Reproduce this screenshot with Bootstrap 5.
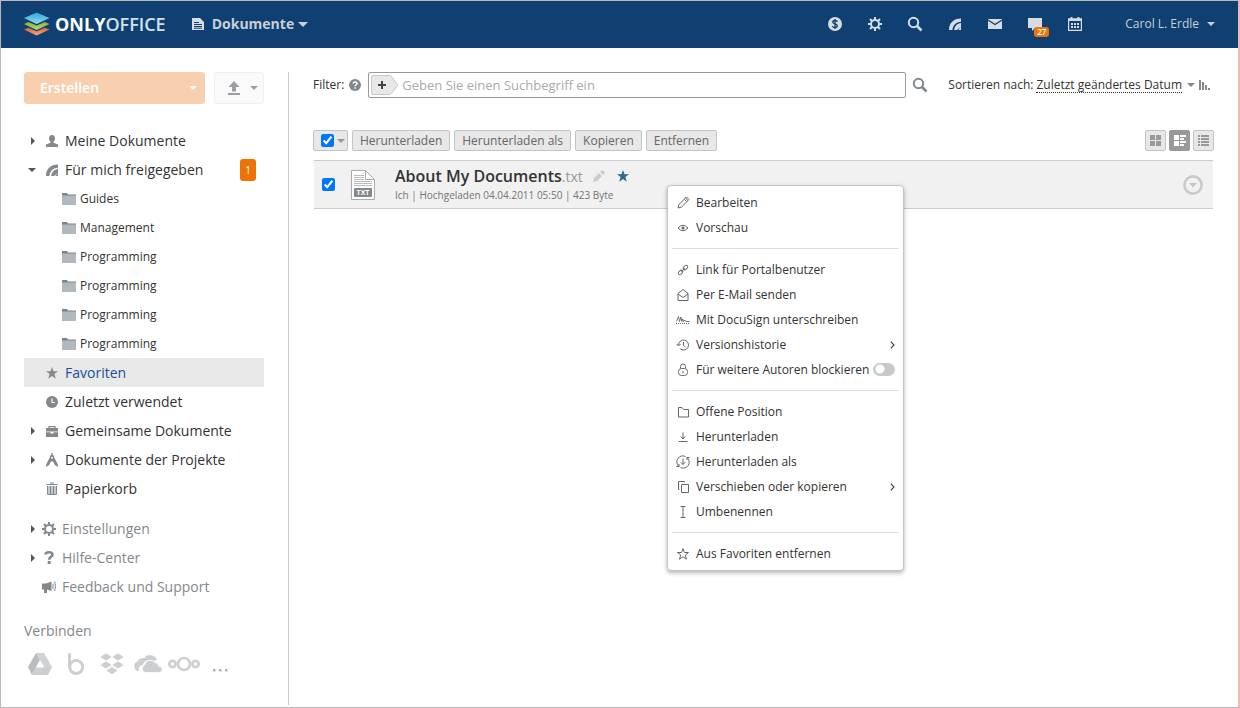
<!DOCTYPE html>
<html lang="de">
<head>
<meta charset="utf-8">
<meta name="viewport" content="width=device-width, initial-scale=1">
<title>ONLYOFFICE – Dokumente</title>
<link href="https://cdn.jsdelivr.net/npm/bootstrap@5.3.0/dist/css/bootstrap.min.css" rel="stylesheet">
<style>
  :root { --oo-navy: #0f4071; --oo-orange: #ed7309; --oo-text: #333; --oo-gray: #83888d; }
  body { font: 12px/16px "Open Sans", sans-serif; color: var(--oo-text); border: 1px solid #b9b9b9; border-right: 2px solid #f3b6b1; background: #fff; }
  a { color: inherit; text-decoration: none; }
  svg { display: block; flex: none; }
  button { font: inherit; color: inherit; }
  .plain-btn { border: 0; background: none; padding: 0; }
  .caret { width: 0; height: 0; flex: none; border: 4px solid transparent; border-top-color: currentColor; border-bottom: 0; }
  .caret-lg { border-width: 5px; border-bottom: 0; }

  .topbar { height: 47px; background: var(--oo-navy); color: #c9cfd6; padding: 0 23px 1px 22px; }
  .brand { font-size: 18px; line-height: 28px; font-weight: 700; color: #fff; }
  .brand svg { margin-right: 5px; }
  .brand span { color: #d3e2e9; font-weight: 600; }
  .module-btn { font-size: 14px; font-weight: 700; margin-left: 26px; }
  .top-icons { gap: 20px; color: #d5dce4; }
  .top-icons a { width: 20px; height: 20px; display: flex; align-items: center; justify-content: center; position: relative; }
  .count { position: absolute; left: 9px; top: 13px; font-size: 8px; line-height: 10px; font-weight: 600; color: #fff; background: var(--oo-orange); border-radius: 3px; padding: 0 3px; }
  .user-btn { margin-left: 40px; }

  .page { margin: 24px 0 2px 23px; }
  .sidebar { width: 265px; flex: none; padding-right: 24px; border-right: 1px solid #ccc; }
  .actions { gap: 9px; }
  .create-btn { height: 32px; background: #f8d0b0; color: #fff; border-radius: 3px; padding: 0 8px 0 16px; font-size: 14px; font-weight: 600; }
  .upload-btn { width: 50px; height: 32px; padding: 0 5px 0 12px; background: #fafafa; border: 1px solid #f0f0f0; border-radius: 3px; color: #9b9fa3; }
  .tree { margin-top: 22px; font-size: 14px; line-height: 20px; }
  .tree a { display: flex; align-items: center; height: 29px; padding-right: 8px; }
  .tree .ico { width: 14px; margin-left: 5px; margin-right: 6px; color: var(--oo-gray); }
  .tree .arrow { width: 16px; height: 10px; color: #555; }
  .tree .sub { padding-left: 38px; font-size: 12px; gap: 4px; }
  .tree .active { background: #e9e9e9; color: #1a4f9c; }
  .tree .new-badge { width: 16px; height: 22px; font-size: 10px; line-height: 22px; text-align: center; color: #fff; background: var(--oo-orange); border-radius: 3px; }
  .tree-muted { margin-top: 11px; color: var(--oo-gray); }
  .tree-muted .ico { margin-left: 2px; margin-right: 6px; }
  .connect-title { margin-top: 20px; font-size: 14px; line-height: 20px; color: var(--oo-gray); }
  .clouds { margin-top: 10px; margin-left: -2px; height: 26px; color: #ccced0; }
  .clouds a { width: 36px; display: flex; justify-content: center; }

  .content { padding: 0 24px; min-width: 0; }
  .help-ico { margin: 0 7px 0 5px; }
  .search-box { height: 26px; border: 1px solid #999; border-radius: 2px; padding: 0 2px; }
  .search-box input { font-size: 13px; border: 0; outline: 0; background: none; padding: 0; margin-left: 3px; color: #333; }
  .search-box input::placeholder { color: #aaa; opacity: 1; }
  .find-btn { margin: 0 20px 0 6px; color: var(--oo-gray); }
  .sort-label { margin-right: 3px; }
  .sort-link { border-bottom: 1px dotted #333; line-height: 15px; }
  .sort-caret { color: var(--oo-gray); margin: 0 4px 0 5px; }
  .sort-ico { margin-right: 3px; }
  .toolbar { margin-top: 32px; gap: 4px; }
  .views { gap: 3px; }
  .tool-btn { height: 21px; border: 1px solid #c4c4c4; border-radius: 2px; background: #e8e8e8; color: #666; line-height: 19px; padding: 0 7px; }
  .tool-check { gap: 3px; padding-right: 2px; }
  .tool-check .caret { color: #999; }
  .view-btn { width: 21px; height: 21px; border: 1px solid #c4c4c4; border-radius: 2px; background: #e8e8e8; color: #999; padding: 0; display: flex; align-items: center; justify-content: center; }
  .view-btn.on { background: #999; border-color: #999; color: #fff; }
  .tick { width: 13px; height: 13px; margin: 0; accent-color: #0075ff; flex: none; }
  .file-row { margin: 9px 1px 0; height: 49px; border-top: 1px solid #ccc; border-bottom: 1px solid #ccc; background: #f1f1f1; padding: 0 10px 0 8px; position: relative; }
  .file-ico { margin: 0 20px 0 16px; }
  .file-info { padding-bottom: 3px; }
  .file-name { font-size: 16px; line-height: 22px; font-weight: 600; color: #333; }
  .file-name span { font-size: 14px; font-weight: 400; color: #999; }
  .file-edit { margin: 0 12px 0 10px; color: #ccc; }
  .file-star { color: #2b66a5; }
  .file-meta { font-size: 10px; line-height: 14px; color: #737373; }

  .ctx { position: absolute; left: 353px; top: 24px; width: 237px; padding: 4px; border: 1px solid #c4c4c4; border-radius: 4px; background: #fff; box-shadow: 0 2px 4px rgba(0,0,0,.3); z-index: 5; }
  .ctx .entry { display: flex; align-items: center; height: 25px; padding: 0 4px; color: #333; }
  .ctx .entry svg.lead-ico { margin-right: 6px; color: #666; }
  .ctx hr { margin: 8px 0; border: 0; height: 1px; background: #ddd; opacity: 1; }
  .toggle { appearance: none; width: 22px; height: 13px; margin: 0; border-radius: 7px; background: radial-gradient(circle at 7px 6px, #fff 4px, transparent 5px) #c9c9c9; flex: none; }
</style>
</head>
<body class="min-vh-100 d-flex flex-column">

<svg width="0" height="0" class="position-absolute" aria-hidden="true">
  <symbol id="gear" viewBox="0 0 14 14"><circle cx="7" cy="7" r="4" fill="none" stroke="currentColor" stroke-width="2"/><g stroke="currentColor" stroke-width="2"><path d="M7 0v2.6M7 11.400v2.600M0 7h2.600M11.400 7h2.600M2 2l2 2M10 10l2 2M12 2l-2 2M4 10l-2 2"/></g></symbol>
  <symbol id="lens" viewBox="0 0 16 16"><circle cx="6.500" cy="6.500" r="4.700" fill="none" stroke="currentColor" stroke-width="2"/><path d="M10 10l4.500 4.500" stroke="currentColor" stroke-width="2.600"/></symbol>
  <symbol id="feed" viewBox="0 0 12 12"><path d="M0 12C0 5 4.500 0.500 12 0.500v3.300C7 4 3.800 7.500 3.500 12zM5.200 12c.3-3.700 3-6.700 6.800-6.900V12H9.200l2.800-3.600L8 12z" fill="currentColor"/></symbol>
  <symbol id="folder" viewBox="0 0 14 12"><path d="M0 0h5l1 1.500h8V12H0z" fill="#78868f"/><path d="M0 2.500h14V12H0z" fill="#b1b9be"/></symbol>
  <symbol id="tri-r" viewBox="0 0 16 10"><path d="M7 1l4 4-4 4z" fill="currentColor"/></symbol>
  <symbol id="tri-d" viewBox="0 0 16 10"><path d="M4 3h8L8 7z" fill="currentColor"/></symbol>
  <symbol id="star" viewBox="0 0 12 12"><path d="M6 0l1.500 4.300H12L8.400 7l1.400 4.700L6 8.900l-3.800 2.800L3.600 7 0 4.300h4.500z" fill="currentColor"/></symbol>
  <symbol id="chev" viewBox="0 0 5 8"><path d="M.8.6L4 4 .8 7.400" fill="none" stroke="#444" stroke-width="1.200"/></symbol>
</svg>

<header class="topbar d-flex align-items-center">
  <a href="#" class="d-flex align-items-center brand">
    <svg width="27" height="24" viewBox="0 0 27 24">
      <defs>
        <linearGradient id="lgB" x2="0" y2="1"><stop stop-color="#2fa5dc"/><stop offset="1" stop-color="#97d8f5"/></linearGradient>
        <linearGradient id="lgG" x2="0" y2="1"><stop stop-color="#86b421"/><stop offset="1" stop-color="#bedb7a"/></linearGradient>
        <linearGradient id="lgR" x2="0" y2="1"><stop stop-color="#e2603c"/><stop offset="1" stop-color="#f5a48c"/></linearGradient>
      </defs>
      <path d="M1 17.500l4.500-1.700 8.200 3.400 8.100-3.400 4.700 1.700-12.800 6z" fill="url(#lgR)"/>
      <path d="M1 12l4.500-2 8.200 3.600 8.100-3.600 4.700 2-12.800 6z" fill="url(#lgG)"/>
      <path d="M1 6L13.700.5 26.500 6l-12.800 6z" fill="url(#lgB)"/>
    </svg>ONLY<span>OFFICE</span></a>
  <button class="plain-btn module-btn d-flex align-items-center" type="button">
    <svg width="12" height="12" viewBox="0 0 12 12" class="me-2"><path d="M0 0h8l4 4v8H0z" fill="#d5dce4"/><path d="M2 4.500h5M2 6.500h8M2 8.500h8M2 10.200h8" stroke="#0f4071"/></svg>
    Dokumente<span class="caret caret-lg ms-1"></span></button>
  <nav class="top-icons d-flex align-items-center ms-auto">
    <a href="#" aria-label="Zahlungen"><svg width="14" height="14" viewBox="0 0 14 14"><circle cx="7" cy="7" r="7" fill="currentColor"/><path d="M9.400 4.600C9 3.800 8.200 3.500 7 3.500c-1.300 0-2.200.6-2.200 1.600C4.800 7.600 9.300 6.300 9.300 8.800c0 1-1 1.700-2.300 1.700s-2.200-.5-2.500-1.400M7 2v10" fill="none" stroke="#0f4071" stroke-width="1.300"/></svg></a>
    <a href="#" aria-label="Einstellungen"><svg width="14" height="14"><use href="#gear"/></svg></a>
    <a href="#" aria-label="Suche"><svg width="16" height="16"><use href="#lens"/></svg></a>
    <a href="#" aria-label="Feed"><svg width="12" height="12"><use href="#feed"/></svg></a>
    <a href="#" aria-label="E-Mail"><svg width="14" height="10" viewBox="0 0 14 10"><path d="M0 0h14v10H0z" fill="currentColor"/><path d="M0 1l7 4.500L14 1" fill="none" stroke="#0f4071" stroke-width="1.200"/></svg></a>
    <a href="#" aria-label="Chat"><svg width="14" height="14" viewBox="0 0 14 14"><path d="M0 1h14v10H7l-3 3v-3H0z" fill="currentColor"/></svg><span class="count">27</span></a>
    <a href="#" aria-label="Kalender"><svg width="14" height="14" viewBox="0 0 14 14"><path d="M.6 2h12.800v11.400H.6z" fill="none" stroke="currentColor" stroke-width="1.200"/><path d="M0 1.500h14V4H0zM2.500 0h2v2h-2zM9.500 0h2v2h-2z" fill="currentColor"/><path d="M3 7h8M3 10h8" stroke="currentColor" stroke-width="2" stroke-dasharray="2 1"/></svg></a>
  </nav>
  <button class="plain-btn user-btn d-flex align-items-center" type="button">Carol L. Erdle<span class="caret ms-2"></span></button>
</header>

<div class="page d-flex flex-grow-1">
  <aside class="sidebar">
    <div class="actions d-flex">
      <button class="plain-btn create-btn d-flex align-items-center flex-grow-1" type="button">Erstellen<span class="caret ms-auto"></span></button>
      <button class="upload-btn d-flex align-items-center justify-content-between" type="button" aria-label="Hochladen"><svg width="14" height="14" viewBox="0 0 14 14"><path d="M7 0l5.500 6H9v4.500H5V6H1.500zM1 12h12v2H1z" fill="currentColor"/></svg><span class="caret"></span></button>
    </div>
    <nav class="tree">
      <a href="#"><svg class="arrow"><use href="#tri-r"/></svg><svg class="ico" height="12" viewBox="0 0 14 12"><path d="M7 0c2 0 3 1.400 3 3.300 0 1.700-.7 2.700-1.500 3.500v1L13 9.500V12H1V9.500l4.500-1.700v-1C4.700 6 4 5 4 3.300 4 1.400 5 0 7 0z" fill="currentColor"/></svg>Meine Dokumente</a>
      <a href="#"><svg class="arrow"><use href="#tri-d"/></svg><svg class="ico" height="12"><use href="#feed"/></svg>Für mich freigegeben<span class="new-badge ms-auto">1</span></a>
      <a href="#" class="sub"><svg width="14" height="12"><use href="#folder"/></svg>Guides</a>
      <a href="#" class="sub"><svg width="14" height="12"><use href="#folder"/></svg>Management</a>
      <a href="#" class="sub"><svg width="14" height="12"><use href="#folder"/></svg>Programming</a>
      <a href="#" class="sub"><svg width="14" height="12"><use href="#folder"/></svg>Programming</a>
      <a href="#" class="sub"><svg width="14" height="12"><use href="#folder"/></svg>Programming</a>
      <a href="#" class="sub"><svg width="14" height="12"><use href="#folder"/></svg>Programming</a>
      <a href="#" class="active"><span class="arrow"></span><svg class="ico" height="12"><use href="#star"/></svg>Favoriten</a>
      <a href="#"><span class="arrow"></span><svg class="ico" height="12" viewBox="0 0 14 12"><circle cx="7" cy="6" r="6" fill="currentColor"/><path d="M7 2.500V6.500h3" fill="none" stroke="#fff" stroke-width="1.200"/></svg>Zuletzt verwendet</a>
      <a href="#"><svg class="arrow"><use href="#tri-r"/></svg><svg class="ico" height="12" viewBox="0 0 14 12"><path d="M4 3.500V1.600h6v1.900" fill="none" stroke="currentColor" stroke-width="1.200"/><path d="M1 3h12v3.500H1zM1 7.300h4.500v1.200h3V7.300H13V12H1z" fill="currentColor"/></svg>Gemeinsame Dokumente</a>
      <a href="#"><svg class="arrow"><use href="#tri-r"/></svg><svg class="ico" height="14" viewBox="0 0 14 14"><path d="M6.300 0h1.400v2c1 .3 1.500 1 1.300 2l3.800 7.500V14L10 12.200 8 8.500H6l-2 3.700L1.200 14v-2.500L5 4c-.2-1 .3-1.700 1.300-2z" fill="currentColor"/><circle cx="7" cy="4.800" r="1" fill="#fff"/></svg>Dokumente der Projekte</a>
      <a href="#"><span class="arrow"></span><svg class="ico" height="13" viewBox="0 0 14 13"><path d="M3 4h8v8.500H3z" fill="#c5c8ca"/><path d="M5 1h4M1.500 2.500h11M2.500 4v8.500h9V4M5.500 4v8M8.500 4v8" fill="none" stroke="currentColor"/></svg>Papierkorb</a>
    </nav>
    <nav class="tree tree-muted">
      <a href="#"><svg class="arrow"><use href="#tri-r"/></svg><svg class="ico" height="14"><use href="#gear"/></svg>Einstellungen</a>
      <a href="#"><svg class="arrow"><use href="#tri-r"/></svg><svg class="ico" height="13" viewBox="0 0 14 13"><path d="M3.400 3.500C3.700 2 5 1.300 7 1.300s3.500.7 3.500 2.400c0 2-3.300 2-3.300 5" fill="none" stroke="currentColor" stroke-width="2.600"/><path d="M5.700 10h3v3h-3z" fill="currentColor"/></svg>Hilfe-Center</a>
      <a href="#"><span class="arrow"></span><svg class="ico" height="12" viewBox="0 0 14 12"><path d="M0 2.500h4L9.500.5v9.500L5 8.500V12H2V8.500H0z" fill="currentColor"/><path d="M11 2.500v5.500M12.500 .5c1.200 2.500 1.200 7 0 9.500" fill="none" stroke="currentColor"/></svg>Feedback und Support</a>
    </nav>
    <div class="connect-title">Verbinden</div>
    <div class="clouds d-flex align-items-center">
      <a href="#" aria-label="Google Drive"><svg width="24" height="22" viewBox="0 0 24 22"><path d="M8 0h8l8 14h-8z" fill="#d0d2d3"/><path d="M8 0l4 7-8 15-4-8z" fill="#bbbdbf"/><path d="M8 14h16l-4 8H4z" fill="#ccced0"/><path d="M12 7l4 7.500H8z" fill="#fff"/></svg></a>
      <a href="#" aria-label="Box"><svg width="18" height="22" viewBox="0 0 18 22"><path d="M2.500 1.500V14" stroke="currentColor" stroke-width="3" stroke-linecap="round"/><circle cx="9.200" cy="14" r="6.500" fill="none" stroke="currentColor" stroke-width="3"/></svg></a>
      <a href="#" aria-label="Dropbox"><svg width="24" height="22" viewBox="0 0 24 22"><path d="M6 0l6 4-6 4-6-4zM18 0l6 4-6 4-6-4zM6 8l6 4-6 4-6-4zM18 8l6 4-6 4-6-4zM12 13.500l6 4-6 4-6-4z" fill="currentColor" stroke="#fff" stroke-width=".6"/></svg></a>
      <a href="#" aria-label="OneDrive"><svg width="30" height="18" viewBox="0 0 30 18"><path d="M5 16a5 5 0 0 1-.5-9.500A6 6 0 0 1 11 3a7.500 7.500 0 0 1 13 2 6 6 0 0 0-3 1C15 3 10 7 10 10c-4 0-5 4-3.500 6z" fill="currentColor"/><path d="M12 17.500a4 4 0 0 1-.5-7.500A6 6 0 0 1 22 7.500a5 5 0 0 1 4 4 3 3 0 0 1 .5 6z" fill="currentColor" stroke="#fff" stroke-width=".8"/></svg></a>
      <a href="#" aria-label="Nextcloud"><svg width="32" height="16" viewBox="0 0 32 16"><g fill="none" stroke="currentColor" stroke-width="2.600"><circle cx="16" cy="8" r="6"/><circle cx="4.500" cy="8" r="3.200"/><circle cx="27.500" cy="8" r="3.200"/></g></svg></a>
      <a href="#" aria-label="Mehr"><svg width="16" height="18" viewBox="0 0 16 18"><path d="M1 14h2.500v2.500H1zM7 14h2.500v2.500H7zM13 14h2.500v2.500H13z" fill="#b0b3b5"/></svg></a>
    </div>
  </aside>

  <main class="content flex-grow-1">
    <div class="d-flex align-items-center">
      <label for="q">Filter:</label>
      <svg class="help-ico" width="12" height="12" viewBox="0 0 12 12"><circle cx="6" cy="6" r="6" fill="#83888d"/><path d="M4 4.700C4.200 3.300 5 3 6 3s2 .4 2 1.500C8 5.800 6.100 5.700 6.100 7.300M6.100 8.200v1.500" fill="none" stroke="#fff" stroke-width="1.400"/></svg>
      <div class="search-box d-flex align-items-center flex-grow-1">
        <button class="plain-btn" type="button" aria-label="Filter hinzufügen"><svg width="28" height="20" viewBox="0 0 28 20"><path d="M.5 2A1.500 1.500 0 0 1 2 .5h17.500L27 10l-7.500 9.500H2A1.500 1.500 0 0 1 .5 18z" fill="#e8e8e8" stroke="#c8c8c8"/><path d="M11 6v8M7 10h8" stroke="#444" stroke-width="2"/></svg></button>
        <input id="q" type="text" class="flex-grow-1" placeholder="Geben Sie einen Suchbegriff ein">
      </div>
      <button class="plain-btn find-btn" type="button" aria-label="Suchen"><svg width="16" height="16"><use href="#lens"/></svg></button>
      <span class="sort-label">Sortieren nach:</span><a href="#" class="sort-link">Zuletzt geändertes Datum</a>
      <span class="caret sort-caret"></span>
      <svg class="sort-ico" width="12" height="12" viewBox="0 0 12 12"><path d="M1 1v10M4 3v8M7 6v5M10 9v2" stroke="#83888d" stroke-width="2"/></svg>
    </div>

    <div class="toolbar d-flex">
      <label class="tool-btn tool-check d-flex align-items-center"><input type="checkbox" class="tick" checked aria-label="Alle auswählen"><span class="caret"></span></label>
      <button class="tool-btn" type="button">Herunterladen</button>
      <button class="tool-btn" type="button">Herunterladen als</button>
      <button class="tool-btn" type="button">Kopieren</button>
      <button class="tool-btn" type="button">Entfernen</button>
      <div class="views d-flex ms-auto">
        <button class="view-btn" type="button" aria-label="Kacheln"><svg width="11" height="11"><path d="M0 0h5v5H0zM6 0h5v5H6zM0 6h5v5H0zM6 6h5v5H6z" fill="currentColor"/></svg></button>
        <button class="view-btn on" type="button" aria-label="Normal"><svg width="12" height="11"><path d="M0 0h5v5H0zM6 0h6v2H6zM6 3h4v2H6zM0 6h5v5H0zM6 6h6v2H6zM6 9h4v2H6z" fill="currentColor"/></svg></button>
        <button class="view-btn" type="button" aria-label="Kompakt"><svg width="11" height="11"><path d="M0 0h2v2H0zM3 0h8v2H3zM0 3h2v2H0zM3 3h8v2H3zM0 6h2v2H0zM3 6h8v2H3zM0 9h2v2H0zM3 9h8v2H3z" fill="currentColor"/></svg></button>
      </div>
    </div>

    <div class="file-row d-flex align-items-center">
      <input type="checkbox" class="tick" checked aria-label="About My Documents.txt">
      <svg class="file-ico" width="24" height="30" viewBox="0 0 24 30"><path d="M.5.500h14l9 9v20H.5z" fill="#fff" stroke="#aaa"/><path d="M14.500.5v9h9" fill="none" stroke="#aaa"/><path d="M3 5.500h10M3 7.500h10M3 9.500h10M3 11.500h18M3 13.500h18M3 15.500h18" stroke="#bbb"/><rect x="3" y="18" width="18" height="9" rx="1" fill="#83888d"/><text x="12" y="25" text-anchor="middle" font-family="Open Sans" font-size="7" font-weight="700" fill="#fff">TXT</text></svg>
      <div class="file-info">
        <div class="d-flex align-items-center">
          <a href="#" class="file-name">About My Documents<span>.txt</span></a>
          <svg class="file-edit" width="12" height="12" viewBox="0 0 12 12"><path d="M0 12l1-4 5-5 3 3-5 5zM7 2l1.600-1.600Q9.500-.2 10.500.8l.9.900q.9.900.1 1.800L10 5z" fill="currentColor"/></svg>
          <svg class="file-star" width="12" height="12"><use href="#star"/></svg>
        </div>
        <div class="file-meta">Ich | Hochgeladen 04.04.2011 05:50 | 423 Byte</div>
      </div>
      <button class="plain-btn ms-auto" type="button" aria-label="Aktionen"><svg width="20" height="20" viewBox="0 0 20 20"><circle cx="10" cy="10" r="8.600" fill="none" stroke="#c9c9c9" stroke-width="2.600"/><path d="M6 8h8l-4 4.500z" fill="#c4c4c4"/></svg></button>

      <div class="ctx">
        <a href="#" class="entry"><svg class="lead-ico" width="14" height="14" viewBox="0 0 14 14"><path d="M2 12l.8-3.300L9.500 2l2.500 2.500-6.700 6.700zM8.300 3.200l2.500 2.500M9.500 2l1-1L13 3.500l-1 1" fill="none" stroke="currentColor"/></svg>Bearbeiten</a>
        <a href="#" class="entry"><svg class="lead-ico" width="14" height="14" viewBox="0 0 14 14"><path d="M2 7Q7 1.500 12 7 7 12.500 2 7z" fill="none" stroke="currentColor"/><circle cx="7" cy="7" r="1.500" fill="currentColor"/></svg>Vorschau</a>
        <hr>
        <a href="#" class="entry"><svg class="lead-ico" width="14" height="14" viewBox="0 0 14 14"><g fill="none" stroke="currentColor" transform="rotate(-45 7 7)"><rect x="1" y="5.400" width="5" height="3.200" rx="1.600"/><rect x="8" y="5.400" width="5" height="3.200" rx="1.600"/><path d="M4.500 7h5"/></g></svg>Link für Portalbenutzer</a>
        <a href="#" class="entry"><svg class="lead-ico" width="14" height="14" viewBox="0 0 14 14"><path d="M2 5.500l5-4 5 4v7H2zM2 6l5 3.500L12 6" fill="none" stroke="currentColor"/></svg>Per E-Mail senden</a>
        <a href="#" class="entry"><svg class="lead-ico" width="14" height="14" viewBox="0 0 14 14"><path d="M.5 8.500l2-5 1 5L5 4l.8 4.500 1-2.500.8 2.500L9 7l1 1.500h3.500" fill="none" stroke="currentColor" stroke-width=".9"/><path d="M0 10.500h14" stroke="currentColor" stroke-dasharray="1 1"/></svg>Mit DocuSign unterschreiben</a>
        <a href="#" class="entry"><svg class="lead-ico" width="14" height="14" viewBox="0 0 14 14"><path d="M2.500 7A5 5 0 1 1 4.200 10.800M.5 6l2 2 2-2M7.500 4v3.500L9.500 9" fill="none" stroke="currentColor"/></svg>Versionshistorie<svg class="ms-auto" width="5" height="8"><use href="#chev"/></svg></a>
        <label class="entry"><svg class="lead-ico" width="14" height="14" viewBox="0 0 14 14"><rect x="2.500" y="5.500" width="9" height="7" rx="3" fill="none" stroke="currentColor"/><path d="M4.500 5.500V3.500a2.500 2.500 0 0 1 5 0v2M7 8v2.500" fill="none" stroke="currentColor"/></svg>Für weitere Autoren blockieren<input type="checkbox" class="toggle ms-auto" role="switch"></label>
        <hr>
        <a href="#" class="entry"><svg class="lead-ico" width="14" height="14" viewBox="0 0 14 14"><path d="M2.500 2.500H6l1.500 2h5v7.500h-10z" fill="none" stroke="currentColor"/></svg>Offene Position</a>
        <a href="#" class="entry"><svg class="lead-ico" width="14" height="14" viewBox="0 0 14 14"><path d="M7 2.500v6.500M4.700 6.500L7 9l2.300-2.500M2.500 11.500h9" fill="none" stroke="currentColor"/></svg>Herunterladen</a>
        <a href="#" class="entry"><svg class="lead-ico" width="14" height="14" viewBox="0 0 14 14"><path d="M9.500 1.500A6 6 0 0 0 3 11.500M4.500 12.500A6 6 0 0 0 11 2.500M.5 11.500H3V9M13.500 2.500H11V5M7 3.500v6M4.800 7.200L7 9.500l2.200-2.300" fill="none" stroke="currentColor"/></svg>Herunterladen als</a>
        <a href="#" class="entry"><svg class="lead-ico" width="14" height="14" viewBox="0 0 14 14"><path d="M5.500 4.500h7v8h-7zM3.500 9.500h-1v-8h6v1" fill="none" stroke="currentColor"/></svg>Verschieben oder kopieren<svg class="ms-auto" width="5" height="8"><use href="#chev"/></svg></a>
        <a href="#" class="entry"><svg class="lead-ico" width="14" height="14" viewBox="0 0 14 14"><path d="M4.500 1.500h5M4.500 12.500h5M7 1.500v11" fill="none" stroke="currentColor"/></svg>Umbenennen</a>
        <hr>
        <a href="#" class="entry"><svg class="lead-ico" width="14" height="14" viewBox="0 0 14 14"><path d="M7 1.500l1.400 4h4.100L9.300 8l1.200 4.200L7 9.700l-3.500 2.500L4.700 8 1.500 5.500h4.100z" fill="none" stroke="currentColor"/></svg>Aus Favoriten entfernen</a>
      </div>
    </div>
  </main>
</div>
<script src="https://cdn.jsdelivr.net/npm/bootstrap@5.3.0/dist/js/bootstrap.bundle.min.js"></script>
</body>
</html>
